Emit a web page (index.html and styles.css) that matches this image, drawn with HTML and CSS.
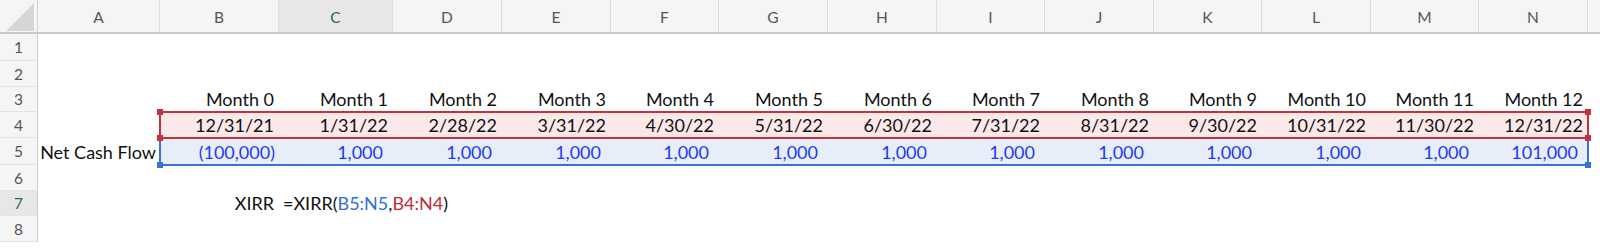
FILE: index.html
```html
<!DOCTYPE html>
<html>
<head>
<meta charset="utf-8">
<link rel="stylesheet" href="styles.css">
</head>
<body>
<div class="sheet">
  <div class="row hdr">
    <div class="corner"><svg width="37" height="32" viewBox="0 0 37 32"><polygon points="6,31 34,3 34,31" fill="#d6d6d6"/></svg></div>
    <div class="ch">A</div>
    <div class="ch">B</div>
    <div class="ch sel">C</div>
    <div class="ch">D</div>
    <div class="ch">E</div>
    <div class="ch">F</div>
    <div class="ch">G</div>
    <div class="ch">H</div>
    <div class="ch">I</div>
    <div class="ch">J</div>
    <div class="ch">K</div>
    <div class="ch">L</div>
    <div class="ch">M</div>
    <div class="ch">N</div>
    <div class="ch last"></div>
  </div>

  <div class="row h27"><div class="rh">1</div></div>
  <div class="row h26"><div class="rh">2</div></div>
  <div class="row h25">
    <div class="rh">3</div>
    <div class="c"></div>
    <div class="c">Month 0</div>
    <div class="c">Month 1</div>
    <div class="c">Month 2</div>
    <div class="c">Month 3</div>
    <div class="c">Month 4</div>
    <div class="c">Month 5</div>
    <div class="c">Month 6</div>
    <div class="c">Month 7</div>
    <div class="c">Month 8</div>
    <div class="c">Month 9</div>
    <div class="c">Month 10</div>
    <div class="c">Month 11</div>
    <div class="c">Month 12</div>
  </div>
  <div class="row h26">
    <div class="rh">4</div>
    <div class="c"></div>
    <div class="range red">
      <div class="c">12/31/21</div>
      <div class="c">1/31/22</div>
      <div class="c">2/28/22</div>
      <div class="c">3/31/22</div>
      <div class="c">4/30/22</div>
      <div class="c">5/31/22</div>
      <div class="c">6/30/22</div>
      <div class="c">7/31/22</div>
      <div class="c">8/31/22</div>
      <div class="c">9/30/22</div>
      <div class="c">10/31/22</div>
      <div class="c">11/30/22</div>
      <div class="c">12/31/22</div>
      <span class="hd tl"></span><span class="hd bl"></span><span class="hd tr"></span><span class="hd br"></span>
    </div>
  </div>
  <div class="row h27">
    <div class="rh">5</div>
    <div class="c label">Net Cash Flow</div>
    <div class="range blu">
      <div class="c num">(100,000)</div>
      <div class="c num pos">1,000</div>
      <div class="c num pos">1,000</div>
      <div class="c num pos">1,000</div>
      <div class="c num pos">1,000</div>
      <div class="c num pos">1,000</div>
      <div class="c num pos">1,000</div>
      <div class="c num pos">1,000</div>
      <div class="c num pos">1,000</div>
      <div class="c num pos">1,000</div>
      <div class="c num pos">1,000</div>
      <div class="c num pos">1,000</div>
      <div class="c num pos">101,000</div>
      <span class="hd bl"></span><span class="hd br"></span>
    </div>
  </div>
  <div class="row h26"><div class="rh">6</div></div>
  <div class="row h25">
    <div class="rh sel">7</div>
    <div class="c"></div>
    <div class="c">XIRR</div>
    <div class="c edit">=XIRR(<span class="rb">B5:N5</span>,<span class="rr">B4:N4</span>)</div>
  </div>
  <div class="row h26"><div class="rh">8</div></div>
</div>
</body>
</html>
```
FILE: styles.css
```css
* { box-sizing: border-box; }
body {
  margin: 0;
  background: #ffffff;
  font-family: Lato, "Liberation Sans", sans-serif;
  color: #111;
}
.sheet { width: 1600px; }
.row {
  display: grid;
  grid-template-columns: 38px 122px 119px 114px 109px 109px 108px 109px 109px 108px 109px 108px 109px 108px 109px 12px;
}
.h25 { height: 25px; }
.h26 { height: 26px; }
.h27 { height: 27px; }

.hdr {
  height: 34px;
  background: #f5f5f5;
  border-bottom: 2px solid #c9c9c9;
}
.corner {
  border-right: 1px solid #d4d4d4;
  display: flex;
}
.ch {
  border-right: 1px solid #dedede;
  display: flex;
  align-items: center;
  justify-content: center;
  color: #555;
  font-size: 15.5px;
  padding-top: 1px;
}
.ch.sel { background: #e7e7e7; color: #1e7145; }
.ch.last { border-right: none; }

.rh {
  background: #f5f5f5;
  border-right: 1px solid #cdcdcd;
  border-bottom: 1px solid #e3e3e3;
  display: flex;
  align-items: center;
  justify-content: center;
  color: #555;
  font-size: 15.5px;
}
.rh.sel { background: #e7e7e7; color: #1e7145; }

.c {
  display: flex;
  align-items: flex-end;
  justify-content: flex-end;
  padding: 0 5px 2px 4px;
  font-size: 18px;
  line-height: 21px;
  white-space: nowrap;
}
.c.label { padding-right: 4px; }
.c.num { color: #1d3cf0; padding-right: 4px; }
.c.num.pos { padding-right: 10px; }
.c.edit { justify-content: flex-start; overflow: visible; }
.rb { color: #3470d0; }
.rr { color: #c32b36; }

.range {
  grid-column: 3 / 16;
  display: grid;
  grid-template-columns: 119px 114px 109px 109px 108px 109px 109px 108px 109px 108px 109px 108px 109px;
  position: relative;
  outline-style: solid;
  outline-width: 2px;
  outline-offset: -1px;
}
.range.red { outline-color: #c4323d; background: #fbe8e8; z-index: 2; }
.range.blu { outline-color: #3a72d0; background: #e8eef9; z-index: 1; }

.hd {
  position: absolute;
  width: 6px;
  height: 6px;
}
.red .hd { background: #c4323d; }
.blu .hd { background: #3a72d0; }
.hd.tl { left: -3px; top: -3px; }
.hd.tr { right: -3px; top: -3px; }
.hd.bl { left: -3px; bottom: -3px; }
.hd.br { right: -3px; bottom: -3px; }
```
